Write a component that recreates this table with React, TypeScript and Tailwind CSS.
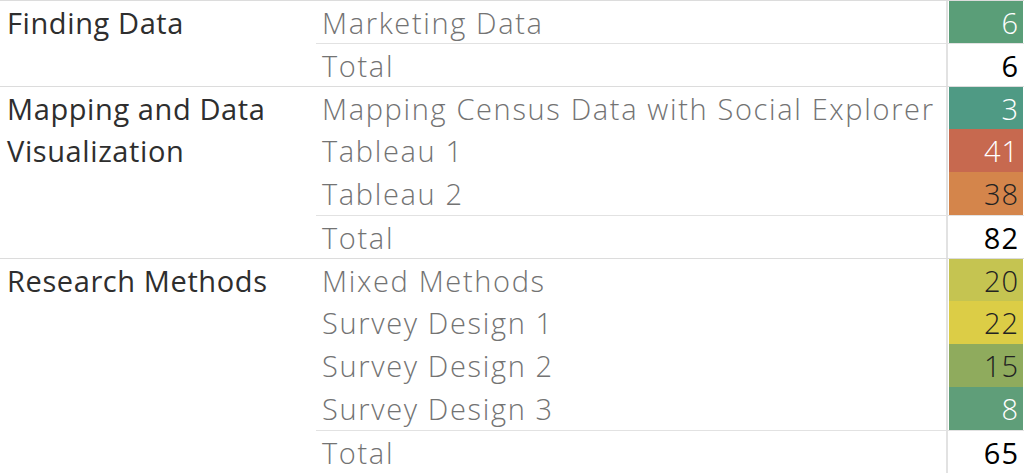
import React from "react";

// TYPES
interface Row {
  label: string;
  value: number;
  bg?: string;
  fg?: string;
  total?: boolean;
}

interface Group {
  name: string[];
  rows: Row[];
}

const groups: Group[] = [
  {
    name: ["Finding Data"],
    rows: [
      { label: "Marketing Data", value: 6, bg: "bg-[#5a9e78]", fg: "text-white" },
      { label: "Total", value: 6, total: true },
    ],
  },
  {
    name: ["Mapping and Data", "Visualization"],
    rows: [
      { label: "Mapping Census Data with Social Explorer", value: 3, bg: "bg-[#4f9a84]", fg: "text-white" },
      { label: "Tableau 1", value: 41, bg: "bg-[#c7694f]", fg: "text-white" },
      { label: "Tableau 2", value: 38, bg: "bg-[#d4854b]", fg: "text-[#222]" },
      { label: "Total", value: 82, total: true },
    ],
  },
  {
    name: ["Research Methods"],
    rows: [
      { label: "Mixed Methods", value: 20, bg: "bg-[#c5c451]", fg: "text-[#222]" },
      { label: "Survey Design 1", value: 22, bg: "bg-[#dccd46]", fg: "text-[#222]" },
      { label: "Survey Design 2", value: 15, bg: "bg-[#8fab5d]", fg: "text-[#222]" },
      { label: "Survey Design 3", value: 8, bg: "bg-[#5f9e79]", fg: "text-white" },
      { label: "Total", value: 65, total: true },
    ],
  },
];

export default function App() {
  return (
    <div className="w-[1024px] h-[473px] bg-white overflow-hidden font-['Open_Sans',sans-serif] text-[29px] leading-[42px]">
      {groups.map((g, gi) => (
        <div key={gi} className="flex border-t border-[#dcdcdc]">
          {/* group header */}
          <div className="w-[316px] shrink-0 pl-[7px] pt-[1px] text-[#2e2e2e] font-medium tracking-[0.6px]">
            {g.name.map((n) => (
              <div key={n} className="h-[42px]">{n}</div>
            ))}
          </div>

          {/* rows */}
          <div className="flex-1">
            {g.rows.map((r, ri) => (
              <div
                key={ri}
                className={`flex ${ri === 0 ? "h-[42px]" : "h-[43px]"} ${r.total ? "border-t border-[#e2e2e2]" : ""}`}
              >
                <div className="flex-1 pl-[6px] pt-[1px] text-[#737373] font-light tracking-[1.65px] whitespace-nowrap">
                  {r.label}
                </div>
                <div className="w-[2px] bg-[#e2e2e2]" />
                <div
                  className={`w-[74px] ml-[1px] mr-[1px] text-right pr-[4px] pt-[1px] tracking-[1px] ${
                    r.total ? "bg-white text-black font-medium" : `${r.bg} ${r.fg} font-light`
                  }`}
                >
                  {r.value}
                </div>
              </div>
            ))}
          </div>
        </div>
      ))}
      <div className="border-t border-[#dcdcdc]" />
    </div>
  );
}
